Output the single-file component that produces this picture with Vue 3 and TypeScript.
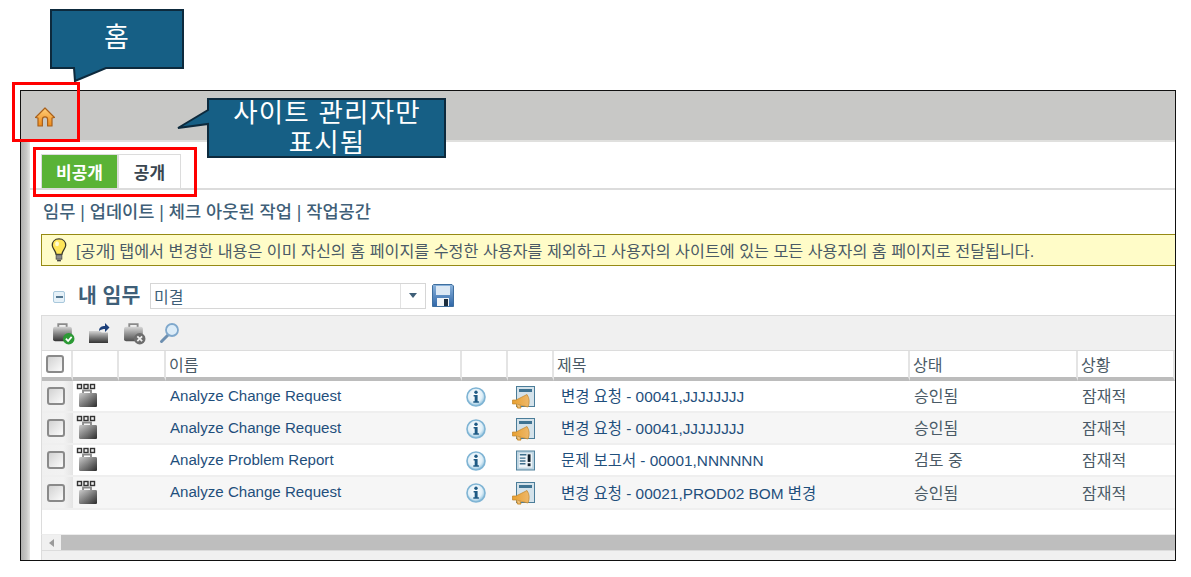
<script setup lang="ts">
interface Row {
  name: string
  kind: 'change' | 'problem'
  title: string
  state: string
  status: string
}

const rows: Row[] = [
  { name: 'Analyze Change Request', kind: 'change', title: '변경 요청 - 00041,JJJJJJJJ', state: '승인됨', status: '잠재적' },
  { name: 'Analyze Change Request', kind: 'change', title: '변경 요청 - 00041,JJJJJJJJ', state: '승인됨', status: '잠재적' },
  { name: 'Analyze Problem Report', kind: 'problem', title: '문제 보고서 - 00001,NNNNNN', state: '검토 중', status: '잠재적' },
  { name: 'Analyze Change Request', kind: 'change', title: '변경 요청 - 00021,PROD02 BOM 변경', state: '승인됨', status: '잠재적' },
]
</script>

<template>
  <div class="page">
    <svg class="defs" width="0" height="0" aria-hidden="true">
      <defs>
        <linearGradient id="bag" x1="0" y1="0" x2="0" y2="1">
          <stop offset="0" stop-color="#d4d4d4" />
          <stop offset="0.5" stop-color="#808080" />
          <stop offset="1" stop-color="#333" />
        </linearGradient>
        <linearGradient id="bagH" x1="0" y1="0" x2="1" y2="0">
          <stop offset="0" stop-color="#c4c4c4" />
          <stop offset="0.5" stop-color="#7a7a7a" />
          <stop offset="1" stop-color="#222" />
        </linearGradient>
        <radialGradient id="info" cx="0.45" cy="0.4" r="0.6">
          <stop offset="0" stop-color="#ffffff" />
          <stop offset="0.65" stop-color="#e2f0f8" />
          <stop offset="1" stop-color="#8dc0dc" />
        </radialGradient>
        <linearGradient id="horn" x1="0" y1="0" x2="1" y2="0">
          <stop offset="0" stop-color="#e8a030" />
          <stop offset="1" stop-color="#eeb86a" />
        </linearGradient>
        <linearGradient id="home" x1="0" y1="0" x2="0" y2="1">
          <stop offset="0" stop-color="#ffcf7a" />
          <stop offset="1" stop-color="#ee8a1a" />
        </linearGradient>
        <linearGradient id="floppy" x1="0" y1="0" x2="0" y2="1">
          <stop offset="0" stop-color="#8cb4dc" />
          <stop offset="1" stop-color="#2f66a8" />
        </linearGradient>
      </defs>
    </svg>

    <div class="frame">
      <div class="topbar">
        <svg class="home-icon" width="20" height="20" viewBox="0 0 20 20">
          <path d="M10 1 L19.5 10.5 L17 11 L17 19 L12.6 19 L12.6 12.5 A2.6 2.6 0 0 0 7.4 12.5 L7.4 19 L3 19 L3 11 L.5 10.5 Z" fill="url(#home)" stroke="#a8601c" stroke-width="1.2" stroke-linejoin="round" />
        </svg>
      </div>
      <div class="shell">
        <div class="side"></div>
        <div class="content">
          <div class="tabs">
            <div class="tab active">비공개</div>
            <div class="tab">공개</div>
          </div>
          <div class="links">임무 | 업데이트 | 체크 아웃된 작업 | 작업공간</div>
          <div class="notice">
            <svg width="16" height="25" viewBox="0 0 16 26">
              <path d="M8 1 C3.5 1 1 4 1 7.5 C1 11 4.5 13 5 17 L11 17 C11.5 13 15 11 15 7.5 C15 4 12.5 1 8 1 Z" fill="#ffe65a" stroke="#3a3a2a" stroke-width="1.3" />
              <rect x="5" y="17.5" width="6" height="4.5" fill="#8a8a8a" stroke="#444" stroke-width=".8" />
              <path d="M6 23.5 L10 23.5" stroke="#444" stroke-width="1.6" />
              <ellipse cx="6" cy="6" rx="2" ry="2.6" fill="#fffbd0" />
            </svg>
            <span>[공개] 탭에서 변경한 내용은 이미 자신의 홈 페이지를 수정한 사용자를 제외하고 사용자의 사이트에 있는 모든 사용자의 홈 페이지로 전달됩니다.</span>
          </div>

          <div class="section-head">
            <span class="collapse"><i></i></span>
            <span class="section-title">내 임무</span>
            <div class="select">
              <span class="select-value">미결</span>
              <span class="select-arrow"><i></i></span>
            </div>
            <svg width="22" height="23" viewBox="0 0 22 23">
              <path d="M1.5 .5 H20 L21.5 2 V22.5 H.5 V1.5 Z" fill="url(#floppy)" stroke="#3f6f9f" />
              <rect x="4" y="2" width="14" height="9" fill="#dce8f4" />
              <rect x="5" y="14" width="12" height="8" fill="#f2f5f8" />
              <rect x="12" y="15" width="4" height="7" fill="#1c2c3c" />
            </svg>
          </div>

          <div class="toolbar">
            <svg width="23" height="23" viewBox="0 0 22 22">
              <path d="M6 5 V2 H14 V5" fill="none" stroke="#8a8a8a" stroke-width="1.8" />
              <rect x="1" y="4.5" width="18" height="14" rx="2" fill="url(#bag)" />
              <circle cx="16" cy="16" r="5.5" fill="#2c9a35" />
              <path d="M13.3 16 L15.4 18.2 L18.8 14.3" fill="none" stroke="#fff" stroke-width="1.7" />
            </svg>
            <svg width="22" height="22" viewBox="0 0 22 22">
              <path d="M1 9 L11 9 L14 10.5 H20 V21 H1 Z" fill="url(#bag)" />
              <path d="M11 9 C11 5 14 4 17 4 L17 1 L21.5 5.5 L17 10 L17 7 C15 7 13 7.5 11 9 Z" fill="#1c3f7a" />
            </svg>
            <svg width="23" height="23" viewBox="0 0 22 22">
              <path d="M6 5 V2 H14 V5" fill="none" stroke="#8a8a8a" stroke-width="1.8" />
              <rect x="1" y="4.5" width="18" height="14" rx="2" fill="url(#bag)" opacity=".85" />
              <circle cx="16" cy="16" r="5.5" fill="#6d6d6d" />
              <path d="M13.7 13.7 L18.3 18.3 M18.3 13.7 L13.7 18.3" stroke="#eee" stroke-width="1.7" />
            </svg>
            <svg width="22" height="22" viewBox="0 0 22 22">
              <path d="M2.5 19.5 L9 13" stroke="#6d8fb0" stroke-width="3" stroke-linecap="round" />
              <circle cx="13" cy="8" r="6" fill="#dcecf8" stroke="#7fa8cc" stroke-width="1.8" />
            </svg>
          </div>

          <table class="grid">
            <colgroup>
              <col class="c-check" />
              <col class="c-icon" />
              <col class="c-icon2" />
              <col class="c-name" />
              <col class="c-icon" />
              <col class="c-icon" />
              <col class="c-title" />
              <col class="c-state" />
              <col />
            </colgroup>
            <thead>
              <tr>
                <th><span class="checkbox"></span></th>
                <th></th>
                <th></th>
                <th>이름</th>
                <th></th>
                <th></th>
                <th>제목</th>
                <th>상태</th>
                <th>상황</th>
              </tr>
            </thead>
            <tbody>
              <tr v-for="(row, i) in rows" :key="i" :class="{ alt: i % 2 === 1 }">
                <td class="check-cell"><span class="checkbox"></span></td>
                <td class="task-cell" colspan="2">
                  <svg width="22" height="26" viewBox="0 0 22 26">
                    <g fill="#eee" stroke="#333" stroke-width="1.4">
                      <rect x="1.5" y="1.5" width="4" height="4" />
                      <rect x="8" y="1.5" width="4" height="4" />
                      <rect x="14.5" y="1.5" width="4" height="4" />
                    </g>
                    <path d="M7 11 V7.5 H15 V11" fill="none" stroke="#888" stroke-width="1.8" />
                    <rect x="3" y="10" width="18" height="14" rx="1.5" fill="url(#bagH)" />
                    <rect x="3" y="10" width="18" height="14" rx="1.5" fill="url(#bag)" opacity=".5" />
                  </svg>
                </td>
                <td class="name">{{ row.name }}</td>
                <td class="center">
                  <svg class="info-icon" width="20" height="20" viewBox="0 0 20 20">
                    <circle cx="10" cy="10" r="9" fill="url(#info)" stroke="#7fb4d4" stroke-width="1.6" />
                    <circle cx="10" cy="5.2" r="1.7" fill="#1e5a84" />
                    <path d="M7.6 8 H11.6 V14.2 H12.9 V15.8 H7.3 V14.2 H8.7 V9.6 H7.6 Z" fill="#1e5a84" />
                  </svg>
                </td>
                <td class="center">
                  <svg v-if="row.kind === 'change'" class="doc-icon" width="23" height="23" viewBox="0 0 23 23">
                    <rect x="4.5" y=".5" width="18" height="20" fill="#d4e2ea" stroke="#4b7d99" />
                    <rect x="7" y="3" width="13" height="3" fill="#3f7392" />
                    <path d="M.5 14 L4 14 L15 8.5 Q18.8 14 16 21 L4 18 L.5 18 Z" fill="url(#horn)" stroke="#c08428" stroke-width=".7" />
                    <path d="M4.5 18.5 L5.5 22 L9 22 L8 19.2" fill="#eec07a" stroke="#c98a28" stroke-width="1" />
                  </svg>
                  <svg v-else class="report-icon" width="19" height="21" viewBox="0 0 20 21">
                    <rect x=".5" y=".5" width="19" height="20" fill="#bfd5e2" stroke="#4b7d99" />
                    <rect x="3" y="3" width="14" height="15" fill="#eef4f8" />
                    <path d="M4 4.5 H11 M4 8 H10 M4 11 H10 M4 14 H10" stroke="#3f6f8c" stroke-width="1.5" />
                    <rect x="12.3" y="4" width="3" height="8" fill="#12202c" />
                    <rect x="12.3" y="13.5" width="3" height="3" fill="#12202c" />
                  </svg>
                </td>
                <td class="title">{{ row.title }}</td>
                <td class="plain">{{ row.state }}</td>
                <td class="plain">{{ row.status }}</td>
              </tr>
            </tbody>
          </table>

          <div class="grid-gap"></div>
          <div class="scrollbar">
            <span class="scroll-arrow"><i></i></span>
            <span class="scroll-thumb"></span>
          </div>
          <div class="grid-foot"></div>
        </div>
      </div>
    </div>

    <div class="callout callout-home">
      <svg width="135" height="76" viewBox="0 0 135 76">
        <path d="M1 1 H133 V59 H56 L25 72 L24 59 H1 Z" fill="#165f85" stroke="#0d2a3d" stroke-width="2" />
      </svg>
      <span class="callout-text one">홈</span>
    </div>
    <div class="callout callout-admin">
      <svg width="270" height="62" viewBox="0 0 270 62">
        <path d="M31 1 H268 V59 H31 V26 L1 30 L31 12 Z" fill="#165f85" stroke="#0d2a3d" stroke-width="2" />
      </svg>
      <span class="callout-text two">사이트 관리자만<br />표시됨</span>
    </div>
    <div class="mark mark-home"></div>
    <div class="mark mark-tabs"></div>
  </div>
</template>

<style scoped>
.page {
  position: relative;
  width: 1191px;
  height: 577px;
  padding: 90px 15px 16px 20px;
  box-sizing: border-box;
  overflow: hidden;
  background: #fff;
  font-family: "Liberation Sans", "Noto Sans CJK KR", sans-serif;
}
.defs {
  position: absolute;
}
.frame {
  height: 471px;
  box-sizing: border-box;
  border: 1.4px solid #111;
  overflow: hidden;
  display: flex;
  flex-direction: column;
}
.topbar {
  height: 49px;
  flex: none;
  display: flex;
  align-items: center;
  padding-left: 14px;
  background: #c8c8c6;
}
.home-icon {
  margin-top: 2px;
}
.shell {
  flex: 1;
  display: flex;
  min-height: 0;
}
.side {
  width: 9px;
  flex: none;
  background: linear-gradient(90deg, #b0b0ae, #c8c8c6 60%, #e4e4e2);
}
.content {
  flex: 1;
  min-width: 0;
  background: #fff;
  border-top: 2px solid #e0e0de;
  padding-top: 12px;
  overflow: hidden;
}
.tabs {
  display: flex;
  height: 34px;
  padding-left: 11px;
  border-bottom: 2px solid #dcdcdc;
}
.tab {
  width: 63px;
  display: flex;
  align-items: center;
  justify-content: center;
  border: 1px solid #dcdcdc;
  border-bottom: 0;
  font-size: 17px;
  font-weight: 700;
  color: #3a4650;
  box-sizing: border-box;
}
.tab.active {
  width: 77px;
  background: #5ab336;
  color: #fff;
}
.links {
  height: 44px;
  box-sizing: border-box;
  padding: 0 0 4px 13px;
  display: flex;
  align-items: center;
  font-size: 17.6px;
  font-weight: 500;
  color: #3f5f78;
  white-space: nowrap;
}
.notice {
  height: 32px;
  margin-left: 11px;
  box-sizing: border-box;
  display: flex;
  align-items: center;
  gap: 9px;
  padding-left: 9px;
  background: #fffcc8;
  border: 1px solid #968a14;
  border-right: 0;
  font-size: 16.2px;
  color: #4a5a66;
  white-space: nowrap;
}
.section-head {
  height: 49px;
  box-sizing: border-box;
  padding-top: 10px;
  margin-left: 23px;
  display: flex;
  align-items: center;
}
.collapse {
  width: 12px;
  height: 12px;
  border: 1px solid #a9c8dc;
  border-radius: 2px;
  background: #e6f1f8;
  display: flex;
  align-items: center;
  justify-content: center;
  box-sizing: border-box;
  margin-top: 2px;
}
.collapse i {
  width: 7px;
  height: 2px;
  background: #557892;
}
.section-title {
  margin: 0 0 3px 13px;
  width: 72px;
  font-size: 20.5px;
  font-weight: 700;
  color: #3f5f78;
  white-space: nowrap;
}
.select {
  width: 276px;
  height: 26px;
  box-sizing: border-box;
  border: 1px solid #d6d6d6;
  display: flex;
  align-items: center;
  margin-right: 6px;
}
.select-value {
  flex: 1;
  padding-left: 3px;
  font-size: 16px;
  color: #3f5f78;
}
.select-arrow {
  width: 24px;
  height: 100%;
  border-left: 1px solid #e2e2e2;
  display: flex;
  align-items: center;
  justify-content: center;
}
.select-arrow i {
  border-left: 4px solid transparent;
  border-right: 4px solid transparent;
  border-top: 5px solid #3f5f78;
}
.toolbar {
  height: 36px;
  margin-left: 11px;
  box-sizing: border-box;
  display: flex;
  align-items: center;
  gap: 13px;
  padding-left: 10px;
  background: #f0f0f0;
  border-top: 1px solid #dcdcdc;
  border-bottom: 1px solid #dcdcdc;
  border-left: 1px solid #dcdcdc;
}
.toolbar svg {
  flex: none;
}
.grid {
  width: calc(100% - 11px);
  margin-left: 11px;
  table-layout: fixed;
  border-collapse: separate;
  border-spacing: 0;
  border-left: 1px solid #dcdcdc;
}
.c-check {
  width: 31px;
}
.c-icon {
  width: 46px;
}
.c-icon2 {
  width: 47px;
}
.c-name {
  width: 296px;
}
.c-title {
  width: 356px;
}
.c-state {
  width: 168px;
}
th {
  height: 26px;
  padding: 0 0 0 3px;
  text-align: left;
  font-size: 16px;
  font-weight: 400;
  color: #4a5a66;
  border-right: 2px solid #e4e4e4;
  border-bottom: 4px solid #bcbcbc;
  box-sizing: content-box;
}
th:first-child {
  padding-left: 4px;
}
td {
  height: 32px;
  box-sizing: border-box;
  padding: 0;
  border-bottom: 2px solid #efefef;
  font-size: 16px;
  vertical-align: middle;
}
tbody tr:last-child td {
  height: 33px;
}
tr.alt td {
  background: #f6f6f6;
}
.checkbox {
  display: block;
  width: 18px;
  height: 18px;
  box-sizing: border-box;
  border: 2px solid #8a8a8a;
  border-radius: 3px;
  background: linear-gradient(135deg, #d2d2d2, #fbfbfb);
}
td.check-cell,
tr.alt td.check-cell {
  padding-left: 5px;
  background: linear-gradient(90deg, #f0f0f0, #f2f2f2 70%, #e4e4e4);
}
.task-cell svg {
  display: block;
  margin: 0 0 0 3px;
}
td.name {
  padding: 0 0 2px 4px;
  font-size: 15.1px;
  color: #1f4f7c;
}
.center svg {
  display: block;
}
.info-icon {
  margin: 1px 0 0 4px;
}
.doc-icon {
  margin: 2px 0 0 4px;
}
.report-icon {
  margin: 1px 0 0 8px;
}
td.title {
  padding: 0 0 2px 7px;
  font-size: 15.4px;
  color: #1f4f7c;
}
td.plain {
  padding: 0 0 2px 4px;
  color: #4a5a66;
}
.grid-gap {
  height: 24px;
  margin-left: 11px;
  border-left: 1px solid #dcdcdc;
}
.scrollbar {
  height: 16px;
  margin-left: 11px;
  display: flex;
  background: #f0f0f0;
  border-top: 1px solid #ececec;
  border-left: 1px solid #dcdcdc;
  box-sizing: border-box;
}
.scroll-arrow {
  width: 19px;
  display: flex;
  align-items: center;
  justify-content: center;
}
.scroll-arrow i {
  border-top: 4px solid transparent;
  border-bottom: 4px solid transparent;
  border-right: 5px solid #9a9a9a;
}
.scroll-thumb {
  flex: 1;
  background: #bebebe;
}
.grid-foot {
  height: 30px;
  box-sizing: border-box;
  margin-left: 11px;
  background: #f0f0f0;
  border-left: 1px solid #dcdcdc;
  border-top: 1px solid #dcdcdc;
}
.callout {
  position: absolute;
}
.callout svg {
  display: block;
}
.callout-home {
  left: 50px;
  top: 9px;
}
.callout-admin {
  left: 177px;
  top: 98px;
}
.callout-text {
  position: absolute;
  color: #fff;
  line-height: 30px;
  text-align: center;
  white-space: nowrap;
}
.callout-text.one {
  left: 0;
  width: 133px;
  top: 14px;
  font-size: 27px;
}
.callout-text.two {
  left: 31px;
  width: 238px;
  top: 0;
  font-size: 26.5px;
  letter-spacing: 1.2px;
}
.mark {
  position: absolute;
  box-sizing: border-box;
  border: 3px solid #ff0000;
}
.mark-home {
  left: 12px;
  top: 82px;
  width: 68px;
  height: 60px;
}
.mark-tabs {
  left: 33px;
  top: 147px;
  width: 164px;
  height: 50px;
}
</style>
